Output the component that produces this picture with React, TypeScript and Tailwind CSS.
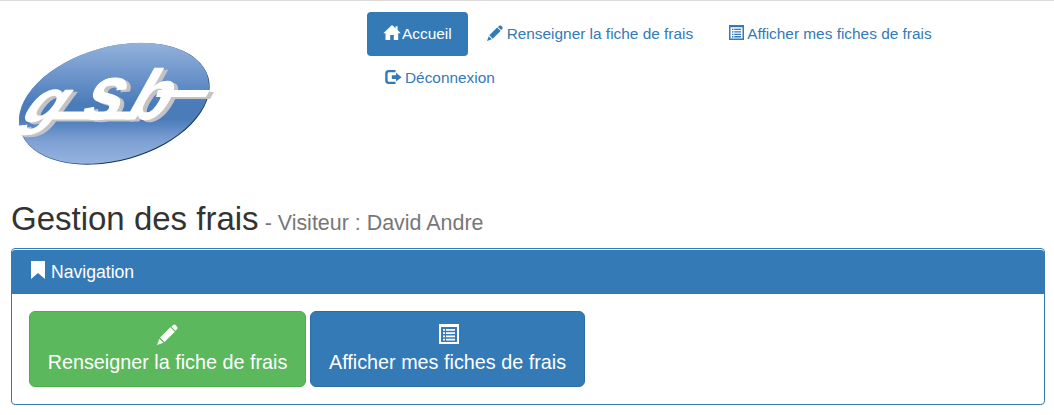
import type { ReactNode } from "react";

function HomeIcon() {
  return (
    <svg className="mb-[3px] h-[15px] w-[18px] shrink-0" viewBox="0 0 18 15" fill="currentColor">
      <path d="M9 0 0.3 8.2h2.2V15h4.7v-5h3.6v5h4.4V8.2h2.5L14.6 5.1V1.2h-2.1v2L9 0Z" />
    </svg>
  );
}

function PencilIcon({ className }: { className: string }) {
  return (
    <svg className={className} viewBox="0 0 20 20" fill="currentColor">
      <path d="M15.1 1.1c.8-.8 1.8-.8 2.5-.1l1.5 1.5c.7.7.7 1.7-.1 2.5l-1.4 1.4-3.9-3.9 1.4-1.4Z" />
      <path d="m12.7 3.1 4.3 4.300-9.900 9.700-4.200-4.300 9.800-9.700Z" />
      <path d="m2.2 14 3.8 3.8L0 20l2.2-6Z" />
    </svg>
  );
}

function ListIcon({ className }: { className: string }) {
  return (
    <svg className={className} viewBox="0 0 20 20" fill="currentColor">
      <path fillRule="evenodd" d="M0 0h20v20H0V0Zm2 3v15h16V3H2Z" />
      <path d="M4 5h2v1.7H4V5Zm3 0h9v1.7H7V5ZM4 8.2h2v1.7H4V8.2Zm3 0h9v1.7H7V8.2ZM4 11.5h2v1.7H4v-1.7Zm3 0h9v1.7H7v-1.7ZM4 14.8h2v1.7H4v-1.7Zm3 0h9v1.7H7v-1.7Z" />
    </svg>
  );
}

function LogoutIcon() {
  return (
    <svg className="mb-[2px] h-[14px] w-[17px] shrink-0" viewBox="0 0 17 14" fill="currentColor">
      <path d="M10.5 0v2.3H4.1c-.9 0-1.5.6-1.5 1.5v6.4c0 .9.6 1.5 1.5 1.5h6.4V14H3.6C1.4 14 .2 12.7.2 10.6V3.5C.2 1.3 1.4 0 3.6 0h6.9Z" />
      <path d="M11 2.7 16.6 7.2 11 11.6V9H6.8V5.3H11V2.7Z" />
    </svg>
  );
}

function Logo() {
  const letters = (
    <>
      <text transform="translate(17 92) skewX(-36) scale(0.98 0.97)" fontSize="62">g</text>
      <text transform="translate(78 89) skewX(-24) scale(0.9 1)" fontSize="76">s</text>
      <text transform="translate(122 89) skewX(-29) scale(0.92 1)" fontSize="70">b</text>
      <path d="M54 81.500h76v8H50ZM158 60h52l-4 7h-50Z" stroke="none" />
    </>
  );
  return (
    <svg
      className="h-[145px] w-[230px]"
      viewBox="0 0 230 145"
      fontFamily="'Liberation Sans', sans-serif"
      fontWeight="700"
    >
      <defs>
        <linearGradient id="oval" x1="0" y1="12" x2="0" y2="135" gradientUnits="userSpaceOnUse" gradientTransform="rotate(15.7 114 73.3)">
          <stop offset="0" stopColor="#95b2dc" />
          <stop offset="0.28" stopColor="#6b94ca" />
          <stop offset="0.5" stopColor="#4b7cba" />
          <stop offset="0.63" stopColor="#4b7cba" />
          <stop offset="0.8" stopColor="#7da0d3" />
          <stop offset="1" stopColor="#98b4df" />
        </linearGradient>
        <linearGradient id="rim" x1="0" y1="0" x2="1" y2="1">
          <stop offset="0.2" stopColor="#5c82b8" />
          <stop offset="0.7" stopColor="#14345f" />
        </linearGradient>
      </defs>
      <ellipse cx="114.3" cy="73.8" rx="97.7" ry="57" fill="url(#rim)" transform="rotate(-15.7 114.3 73.8)" />
      <ellipse cx="114" cy="73.3" rx="97.4" ry="56.5" fill="url(#oval)" transform="rotate(-15.7 114 73.3)" />
      <g fill="#c3c3c6" stroke="#c3c3c6" strokeWidth="1" strokeLinejoin="round" transform="translate(4 2)" aria-hidden="true">{letters}</g>
      <g fill="#fff" stroke="#fff" strokeWidth="1" strokeLinejoin="round">{letters}</g>
    </svg>
  );
}

function NavItem({ children, active }: { children: ReactNode; active?: boolean }) {
  return (
    <a
      href="#"
      className={
        active
          ? "flex h-11 items-center rounded-[4px] bg-[#337ab7] px-4 text-white"
          : "flex h-11 items-center px-4 text-[#337ab7]"
      }
    >
      {children}
    </a>
  );
}

export default function App() {
  return (
    <div className="h-[415px] w-[1054px] overflow-hidden border-t border-[#dadada] bg-white font-['Liberation_Sans',Arial,sans-serif] text-[15.4px] leading-[22px] text-[#333]">
      <header className="flex h-[174px]">
        <div className="w-[367px] pt-[29px]">
          <Logo />
        </div>
        <nav className="flex w-[660px] flex-wrap content-start gap-x-[2px] pt-[11px]">
          <NavItem active>
            <HomeIcon />
            <span className="ml-px">Accueil</span>
          </NavItem>
          <NavItem>
            <PencilIcon className="mb-[2px] ml-px size-[16px] shrink-0" />
            <span className="ml-1">Renseigner la fiche de frais</span>
          </NavItem>
          <NavItem>
            <ListIcon className="mb-[3px] ml-[2px] size-[15px] shrink-0" />
            <span className="ml-[3px]">Afficher mes fiches de frais</span>
          </NavItem>
          <div className="basis-full">
            <NavItem>
              <span className="ml-[2px]">
                <LogoutIcon />
              </span>
              <span className="ml-[3px]">Déconnexion</span>
            </NavItem>
          </div>
        </nav>
      </header>
      <main className="px-[11px] pr-[9px]">
        <h2 className="flex h-[73px] items-baseline pt-[26px] text-[33px] leading-[36px]">
          Gestion des frais
          <small className="ml-[6px] text-[21.45px] leading-none text-[#777]">- Visiteur : David Andre</small>
        </h2>
        <section className="h-[157px] rounded-[4px] border border-[#337ab7] pt-px">
          <h3 className="flex h-11 items-center rounded-t-[3px] bg-[#337ab7] pl-[19px] text-[17.6px] text-white">
            <svg className="mb-[4px] h-[18px] w-[14px]" viewBox="0 0 14 18" fill="currentColor">
              <path d="M0 0h14v18l-7-6-7 6V0Z" />
            </svg>
            <span className="ml-[6px]">Navigation</span>
          </h3>
          <div className="flex gap-1 px-[17px] pt-[17px] text-[19.8px] leading-[26px] text-white">
            <a href="#" className="flex h-[76px] w-[277px] flex-col items-center rounded-[6px] border border-[#4cae4c] bg-[#5cb85c] pt-3">
              <PencilIcon className="size-[21px]" />
              <span className="mt-[4px] whitespace-nowrap">Renseigner la fiche de frais</span>
            </a>
            <a href="#" className="flex h-[76px] w-[275px] flex-col items-center rounded-[6px] border border-[#2e6da4] bg-[#337ab7] pt-3">
              <ListIcon className="ml-[3px] size-[20px]" />
              <span className="mt-[5px] whitespace-nowrap">Afficher mes fiches de frais</span>
            </a>
          </div>
        </section>
      </main>
    </div>
  );
}
